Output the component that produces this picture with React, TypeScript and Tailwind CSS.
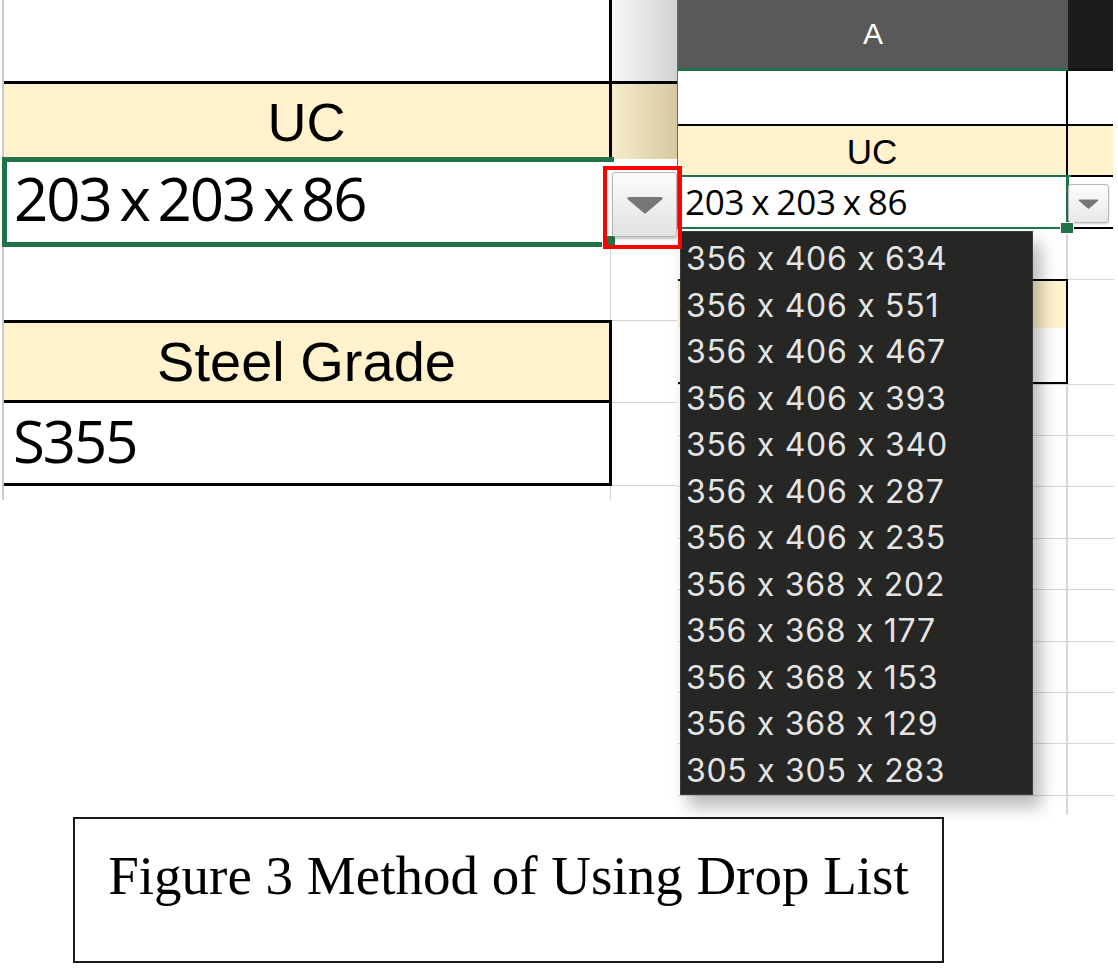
import React from 'react';

const SECTIONS = [
  '356 x 406 x 634',
  '356 x 406 x 551',
  '356 x 406 x 467',
  '356 x 406 x 393',
  '356 x 406 x 340',
  '356 x 406 x 287',
  '356 x 406 x 235',
  '356 x 368 x 202',
  '356 x 368 x 177',
  '356 x 368 x 153',
  '356 x 368 x 129',
  '305 x 305 x 283',
];

// grid rows under the drop list, right sheet
const GRID_ROWS = [51, 51, 52, 51, 52, 51, 51, 52];

function Arrow({ w, h }: { w: number; h: number }) {
  return (
    <svg width={w} height={h} viewBox="0 0 20 10">
      <path d="M1 0.5h18a0.8 0.8 0 0 1 0.6 1.3L10.6 9.4a0.8 0.8 0 0 1-1.2 0L0.4 1.8A0.8 0.8 0 0 1 1 0.5z" fill="#767676" />
    </svg>
  );
}

function LeftSheet() {
  return (
    <div className="relative h-[817px] w-[677px] shrink-0">
      <div className="ml-[2px] flex w-[675px] flex-col border-l-2 border-[#cbcbcb]">
        <div className="flex h-[81px]">
          <div className="w-[605px] bg-white" />
          <div className="w-[3px] bg-black" />
          <div className="flex-1 bg-linear-to-r from-[#f8f8f8] to-[#d2d2d2]" />
        </div>
        <div className="h-[3px] bg-black" />
        <div className="flex h-[75px]">
          <div className="flex w-[605px] items-center justify-center bg-[#fff2cc] font-['Liberation_Sans',Arial,sans-serif] text-[54px] leading-none text-black">
            UC
          </div>
          <div className="w-[3px] bg-black" />
          <div className="flex-1 bg-linear-to-r from-[#f7ecca] to-[#d6c9a2]" />
        </div>
        <div className="flex h-[88px]">
          <div className="flex w-[605px] items-center pl-[10px] pb-[10px] font-['Open_Sans',sans-serif] text-[60px] leading-none tracking-[-2px] text-black [word-spacing:-5px]">
            203 x 203 x 86
          </div>
          <div className="w-[3px] bg-white" />
          <div className="flex-1 bg-white" />
        </div>
        <div className="flex h-[73px]">
          <div className="w-[605px] bg-white" />
          <div className="w-[3px] border-x border-white bg-[#d4d4d4]" />
          <div className="flex-1 bg-white" />
        </div>
        <div className="flex h-[83px]">
          <div className="flex w-[605px] items-center justify-center border-y-[3px] border-black bg-[#fff2cc] font-['Liberation_Sans',Arial,sans-serif] text-[56px] leading-none text-black">
            Steel Grade
          </div>
          <div className="w-[3px] bg-black" />
          <div className="flex-1 border-y border-[#d4d4d4] bg-white" />
        </div>
        <div className="flex h-[83px]">
          <div className="flex w-[605px] items-center border-b-[3px] border-black pl-[9px] pb-[4px] font-['Open_Sans',sans-serif] text-[58px] leading-none tracking-[-2px] text-black">
            S355
          </div>
          <div className="w-[3px] bg-black" />
          <div className="flex-1 border-b border-[#d4d4d4] bg-white" />
        </div>
        <div className="flex h-[14px]">
          <div className="w-[605px] bg-white" />
          <div className="w-[3px] border-x border-white bg-[#d4d4d4]" />
          <div className="flex-1 bg-white" />
        </div>
      </div>

      {/* selected cell */}
      <div className="absolute left-[2px] top-[157px] h-[90px] w-[612px] border-[5px] border-r-0 border-[#1f7346]" />
      <div className="absolute left-[603px] top-[236px] h-[12px] w-[12px] bg-[#1f7346] ring-1 ring-white" />

      {/* drop button */}
      <div className="absolute left-[612px] top-[172px] flex h-[65px] w-[65px] items-center justify-center rounded-[3px] border border-[#b4b4b4] bg-linear-to-b from-[#fbfbfb] to-[#e2e2e2] shadow-[1px_2px_3px_rgba(0,0,0,0.25)]">
        <Arrow w={36} h={18} />
      </div>
      <div className="absolute left-[603px] top-[166px] z-30 h-[83px] w-[79px] border-4 border-[#ff0000]" />
    </div>
  );
}

function RightSheet() {
  return (
    <div className="relative h-[817px] w-[441px] shrink-0">
      <div className="flex w-[436px] flex-col border-l border-[#6a6a6a]">
        <div className="flex h-[68px]">
          <div className="flex w-[390px] items-center justify-center bg-[#595959] font-['Liberation_Sans',Arial,sans-serif] text-[30px] leading-none text-white">
            A
          </div>
          <div className="flex-1 bg-[#1c1c1c]" />
        </div>
        <div className="flex h-[3px]">
          <div className="w-[390px] bg-[#1f7346]" />
          <div className="flex-1 bg-[#111]" />
        </div>
        <div className="flex h-[53px]">
          <div className="w-[388px] bg-white" />
          <div className="w-[2px] bg-black" />
          <div className="flex-1 bg-white" />
        </div>
        <div className="h-[2px] bg-black" />
        <div className="flex h-[49px]">
          <div className="flex w-[388px] items-center justify-center bg-[#fff2cc] pt-[2px] font-['Liberation_Sans',Arial,sans-serif] text-[35px] leading-none text-black">
            UC
          </div>
          <div className="w-[2px] bg-black" />
          <div className="flex-1 bg-[#fff2cc]" />
        </div>
        <div className="flex h-[2px]">
          <div className="w-[393px] bg-[#1f7346]" />
          <div className="flex-1 bg-black" />
        </div>
        <div className="flex h-[50px]">
          <div className="flex w-[388px] items-center pl-[7px] pb-[2px] font-['Open_Sans',sans-serif] text-[35px] leading-none tracking-[-0.2px] text-black [word-spacing:-2px]">
            203 x 203 x 86
          </div>
          <div className="w-[3px] bg-[#1f7346]" />
          <div className="flex-1 bg-white" />
        </div>
        <div className="flex h-[2px]">
          <div className="w-[391px] bg-[#1f7346]" />
          <div className="w-[4px] bg-white" />
          <div className="flex-1 bg-black" />
        </div>
      </div>
      <div className="flex w-[437px] flex-col pl-[1px]">
        <div className="flex h-[50px]">
          <div className="w-[388px] bg-white" />
          <div className="w-[2px] bg-[#d6d6d6]" />
          <div className="flex-1 bg-white" />
        </div>
        <div className="flex h-[51px] border-t border-[#d6d6d6]">
          <div className="-mt-px w-[388px] border-y-2 border-black bg-[#fff2cc]" />
          <div className="-mt-px w-[2px] bg-black" />
          <div className="flex-1 bg-white" />
        </div>
        <div className="flex h-[55px] border-b border-[#d6d6d6]">
          <div className="-mt-[2px] w-[388px] border-b-2 border-black bg-white" />
          <div className="-mt-[2px] w-[2px] bg-black" />
          <div className="flex-1 bg-white" />
        </div>
        {GRID_ROWS.map((h, i) => (
          <div key={i} className="flex border-b border-[#d6d6d6]" style={{ height: h }}>
            <div className="w-[388px] bg-white" />
            <div className="w-[2px] bg-[#d6d6d6]" />
            <div className="flex-1 bg-white" />
          </div>
        ))}
        <div className="flex h-[19px]">
          <div className="w-[388px] bg-white" />
          <div className="w-[2px] bg-[#d6d6d6]" />
          <div className="flex-1 bg-white" />
        </div>
      </div>

      {/* drop button and fill handle */}
      <div className="absolute left-[391px] top-[184px] flex h-[39px] w-[41px] items-center justify-center rounded-[3px] border border-[#b8b8b8] bg-linear-to-b from-[#fcfcfc] to-[#e8e8e8] shadow-[0_1px_2px_rgba(0,0,0,0.2)]">
        <Arrow w={21} h={10} />
      </div>
      <div className="absolute left-[384px] top-[223px] z-10 h-[10px] w-[12px] bg-[#1f7346] ring-1 ring-white" />

      {/* the open list */}
      <div className="absolute left-[3px] top-[231px] z-20 flex h-[564px] w-[353px] flex-col border border-[#3b3b39] bg-[#262624] shadow-[8px_12px_16px_rgba(0,0,0,0.28)]">
        {SECTIONS.map((s) => (
          <div
            key={s}
            className="flex h-[46.5px] shrink-0 items-center pl-[5px] pt-[8px] font-['Inter',sans-serif] text-[32px] leading-none tracking-[0.7px] text-[#e4e4e4]"
          >
            {s}
          </div>
        ))}
      </div>
    </div>
  );
}

export default function App() {
  return (
    <div className="flex h-[971px] w-[1118px] flex-col overflow-hidden bg-white">
      <div className="flex h-[817px]">
        <LeftSheet />
        <RightSheet />
      </div>
      <div className="ml-[73px] h-[146px] w-[871px] border-2 border-[#1a1a1a] pt-[29px] text-center font-['Liberation_Serif','Times_New_Roman',serif] text-[55px] leading-[55px] text-black">
        Figure 3 Method of Using Drop List
      </div>
    </div>
  );
}
